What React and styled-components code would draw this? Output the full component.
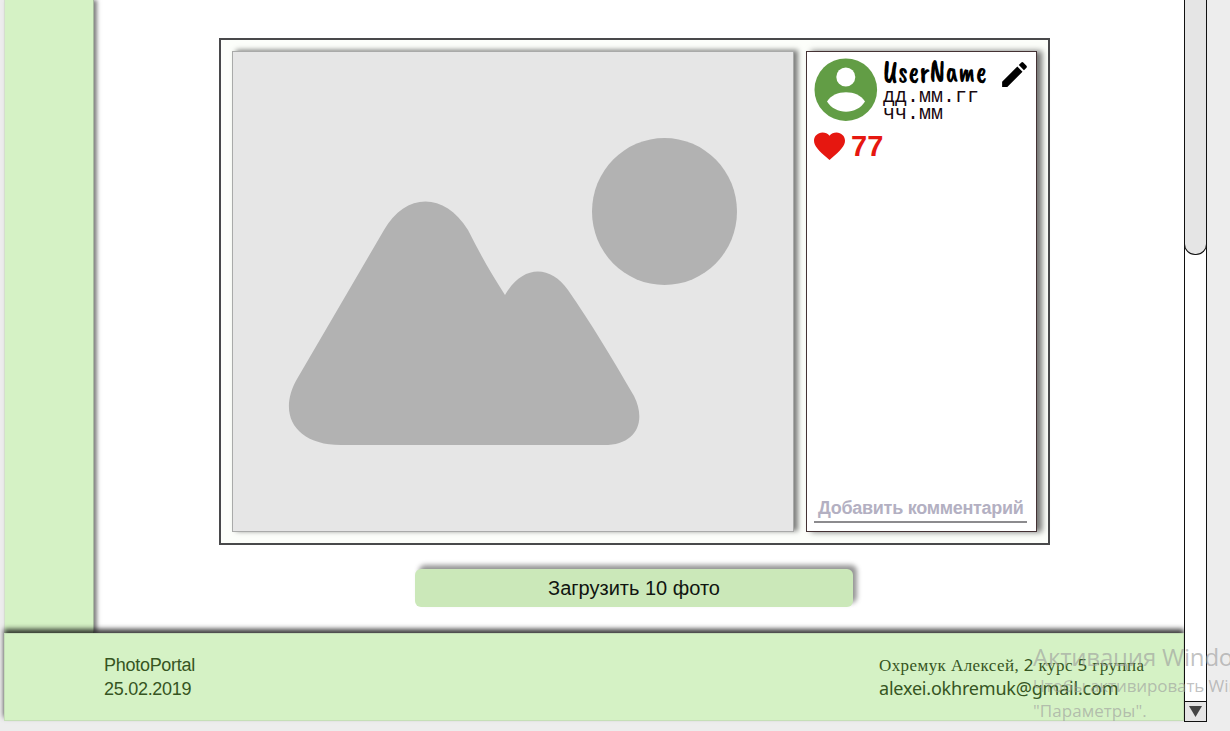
import React from 'react';
import styled, { createGlobalStyle } from 'styled-components';

const GlobalStyle = createGlobalStyle`
  * { box-sizing: border-box; }
  body { margin: 0; background: #ededed; overflow: hidden; font-family: "Liberation Sans", Arial, sans-serif; }
`;

const Page = styled.div`
  position: relative;
  width: 1230px;
  height: 731px;
  padding-left: 4px;
  display: flex;
  align-items: flex-start;
  overflow: hidden;
`;

const Portal = styled.div`
  width: 1180px;
  height: 721px;
  display: flex;
  flex-direction: column;
`;

const Body = styled.div`
  display: flex;
  height: 633px;
  background: #fff;
`;

const Sidebar = styled.aside`
  width: 90px;
  flex: none;
  background: #d5f2c5;
  border-left: 1px solid #d5dece;
  border-right: 1px solid #a9bca0;
  box-shadow: 3px 0 4px rgba(0, 0, 0, 0.5);
`;

const Feed = styled.main`
  flex: 1;
  padding: 38px 0 0 125px;
`;

const Post = styled.article`
  display: flex;
  gap: 12px;
  width: 831px;
  height: 507px;
  padding: 11px;
  border: 2px solid #49494b;
  background: #fcfefa;
`;

const Photo = styled.div`
  width: 562px;
  height: 481px;
  border: 1px solid #a9aaa9;
  background: #e6e6e6;
  box-shadow: 4px -1px 5px rgba(0, 0, 0, 0.5);
  svg { display: block; }
`;

const Details = styled.section`
  width: 231px;
  height: 481px;
  padding: 6px 9px 8px 7px;
  display: flex;
  flex-direction: column;
  border: 1px solid #443234;
  background: #fff;
  box-shadow: 5px 0 6px rgba(0, 0, 0, 0.55);
`;

const Author = styled.header`
  display: flex;
  height: 64px;
  margin-right: -4px;
  > svg { flex: none; }
`;

const AuthorText = styled.div`
  flex: 1;
  padding: 0 0 0 5px;
`;

const UserName = styled.div`
  height: 30px;
  width: 110px;
  font: 400 29px/28px "Caveat Brush", cursive;
  color: #000;
  letter-spacing: 0.3px;
  transform: scaleY(1.1);
  white-space: nowrap;
`;

const DateText = styled.div`
  font: 20px/17px "Courier New", "Liberation Mono", monospace;
  color: #18080f;
  white-space: nowrap;
`;

const Likes = styled.div`
  display: flex;
  align-items: center;
  gap: 6px;
  height: 34px;
  margin-top: 7px;
  color: #e61710;
  font-size: 29px;
  font-weight: 700;
  line-height: 34px;
`;

const CommentInput = styled.div`
  height: 29px;
  margin-top: auto;
  padding-left: 4px;
  border-bottom: 2px solid #8c8b8e;
  color: #b3b0c2;
  font-size: 18px;
  font-weight: 700;
  line-height: 28px;
  letter-spacing: -0.28px;
  white-space: nowrap;
`;

const LoadButton = styled.button`
  display: block;
  width: 438px;
  height: 38px;
  margin: 24px 0 0 196px;
  padding: 0;
  border: 0;
  border-radius: 6px;
  background: #cbe8b9;
  color: #101510;
  font: 20px/38px "Liberation Sans", Arial, sans-serif;
  box-shadow: 4px -4px 5px rgba(0, 0, 0, 0.42);
`;

const Footer = styled.footer`
  position: relative;
  display: flex;
  justify-content: space-between;
  height: 88px;
  padding: 19px 37px 0 99px;
  border: 1px solid #c6dfb8;
  background: #d5f2c5;
  box-shadow: 0 -4px 5px rgba(0, 0, 0, 0.75);
  color: #365522;
  font-size: 18px;
  line-height: 24px;
`;

const SiteInfo = styled.div`
  letter-spacing: -0.28px;
`;

const Contact = styled.div`
  width: 267px;
  white-space: nowrap;
`;

const FullName = styled.div`
  font-family: "Liberation Serif", "Times New Roman", serif;
  font-size: 17px;
  letter-spacing: 0.42px;
  span { font-family: "Noto Sans", sans-serif; }
`;

const Email = styled.div`
  font-family: "Noto Sans", sans-serif;
  font-size: 18px;
  line-height: 21px;
  letter-spacing: -0.2px;
`;

const ScrollTrack = styled.div`
  position: relative;
  display: flex;
  flex-direction: column;
  justify-content: space-between;
  width: 23px;
  height: 722px;
  border: 1px solid #111;
  border-top: 0;
  background: #fff;
`;

const ScrollThumb = styled.div`
  width: 23px;
  height: 255px;
  margin-left: -1px;
  border: 1px solid #111;
  border-top: 0;
  border-radius: 0 0 11px 11px;
  background: #e5e5e5;
`;

const ScrollDown = styled.div`
  display: flex;
  align-items: center;
  justify-content: center;
  height: 20px;
  border-top: 1px solid #111;
  background: #e5e5e5;
`;

const Watermark = styled.div`
  position: absolute;
  left: 1033px;
  top: 641px;
  color: rgba(155, 155, 155, 0.62);
  font: 17px/25px "Open Sans", sans-serif;
  white-space: nowrap;
`;

const WatermarkTitle = styled.div`
  font-size: 24px;
  line-height: 32px;
  letter-spacing: -0.2px;
`;

const WatermarkLine = styled.div`
  letter-spacing: ${({ $spacing }) => $spacing || '-0.1px'};
`;

function PhotoPlaceholder() {
  return (
    <svg width="560" height="479" viewBox="233 52 560 479" fill="#b2b2b2">
      <ellipse cx="664.5" cy="211.5" rx="72.5" ry="73.5" />
      <path d="M384 230C405 193 444 191 468 230C480 254 492 275 505 295C522 265 550 264 568 290C591 323 612 358 634 396C647 422 636 445 604 445H341C295 445 277 414 297 379Z" />
    </svg>
  );
}

function Avatar() {
  return (
    <svg width="64" height="64" viewBox="0 0 64 64">
      <circle cx="31.8" cy="31.7" r="31.3" fill="#629d45" />
      <circle cx="31.8" cy="19" r="9.5" fill="#fff" />
      <path d="M13 43.5C20 31 44 31 51 43.5C43 57 21 57 13 43.5Z" fill="#fff" />
    </svg>
  );
}

function Pencil() {
  return (
    <svg width="33" height="33" viewBox="0 0 24 24" fill="#000">
      <path d="M3 17.25V21h3.75L17.81 9.94l-3.75-3.75L3 17.25zM20.71 7.04c.39-.39.39-1.02 0-1.41l-2.34-2.34a1 1 0 0 0-1.41 0l-1.83 1.83 3.75 3.75 1.83-1.83z" />
    </svg>
  );
}

function Heart() {
  return (
    <svg width="31" height="28" viewBox="2 2.6 20 18.75" preserveAspectRatio="none" fill="#e61710">
      <path d="m12 21.35-1.45-1.32C5.4 15.36 2 12.28 2 8.5 2 5.42 4.42 3 7.5 3c1.74 0 3.41.81 4.5 2.09C13.09 3.81 14.76 3 16.5 3 19.58 3 22 5.42 22 8.5c0 3.78-3.4 6.86-8.55 11.54L12 21.35z" />
    </svg>
  );
}

export default function App() {
  return (
    <Page>
      <GlobalStyle />
      <Portal>
        <Body>
          <Sidebar />
          <Feed>
            <Post>
              <Photo><PhotoPlaceholder /></Photo>
              <Details>
                <Author>
                  <Avatar />
                  <AuthorText>
                    <UserName>UserName</UserName>
                    <DateText>дд.мм.гг</DateText>
                    <DateText>чч.мм</DateText>
                  </AuthorText>
                  <Pencil />
                </Author>
                <Likes><Heart />77</Likes>
                <CommentInput>Добавить комментарий</CommentInput>
              </Details>
            </Post>
            <LoadButton>Загрузить 10 фото</LoadButton>
          </Feed>
        </Body>
        <Footer>
          <SiteInfo>
            <div>PhotoPortal</div>
            <div>25.02.2019</div>
          </SiteInfo>
          <Contact>
            <FullName>Охремук Алексей, <span>2</span> курс <span>5</span> группа</FullName>
            <Email>alexei.okhremuk@gmail.com</Email>
          </Contact>
        </Footer>
      </Portal>
      <ScrollTrack>
        <ScrollThumb />
        <ScrollDown>
          <svg width="13" height="11" viewBox="0 0 13 11"><path d="M0 0H13L6.5 11Z" fill="#444" /></svg>
        </ScrollDown>
      </ScrollTrack>
      <Watermark>
        <WatermarkTitle>Активация Windows</WatermarkTitle>
        <WatermarkLine>Чтобы активировать Windows</WatermarkLine>
        <WatermarkLine $spacing="0.05px">"Параметры".</WatermarkLine>
      </Watermark>
    </Page>
  );
}
